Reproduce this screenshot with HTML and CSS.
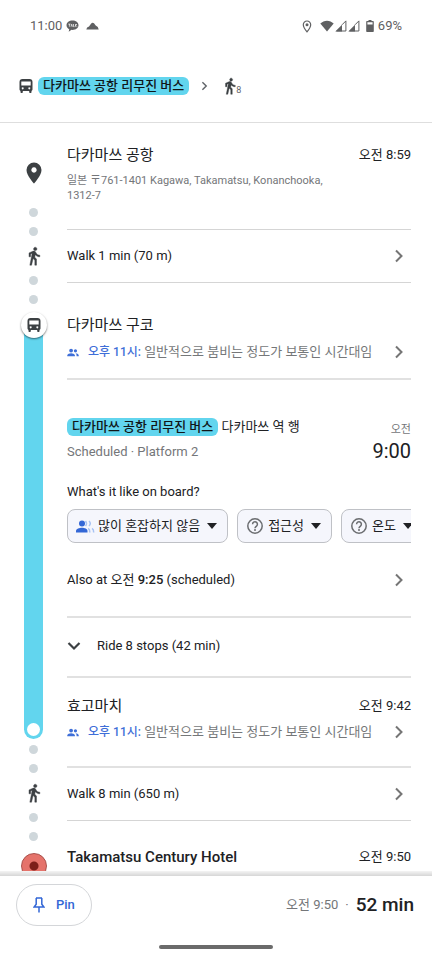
FILE: index.html
```html
<!DOCTYPE html>
<html lang="ko">
<head>
<meta charset="utf-8">
<meta name="viewport" content="width=device-width, initial-scale=1">
<title>다카마쓰 공항 리무진 버스</title>
<link rel="stylesheet" href="styles.css">
</head>
<body>
<svg class="defs" aria-hidden="true">
  <symbol id="walk" viewBox="0 0 24 24"><path stroke="currentColor" stroke-width=".5" d="M13.500 5.500c1.100 0 2-.9 2-2s-.9-2-2-2-2 .9-2 2 .9 2 2 2zM9.800 8.900L7 23h2.100l1.800-8 2.100 2v6h2v-7.500l-2.100-2 .6-3C14.800 12 16.800 13 19 13v-2c-1.900 0-3.500-1-4.300-2.400l-1-1.600c-.4-.6-1-1-1.700-1-.3 0-.5.1-.8.1L6 8.300V13h2V9.600l1.800-.7Z"/></symbol>
  <symbol id="bus" viewBox="0 0 14 14"><path fill-rule="evenodd" d="M3.500 0h7Q13.500 0 13.500 3V10.500Q13.500 11.300 12.500 11.900V13.200Q12.500 14 11.700 14H11Q10.200 14 10.200 13.200V12H3.800V13.200Q3.800 14 3 14H2.300Q1.500 14 1.500 13.200V11.900Q.5 11.300.5 10.500V3Q.5 0 3.500 0ZM2.300 2.500V6.500H11.700V2.500ZM3.700 8.200a1 1 0 1 0 .01 0ZM10.300 8.200a1 1 0 1 0 .01 0Z"/></symbol>
  <symbol id="chevron" viewBox="0 0 10 14"><path d="M2 1.500 7.500 7 2 12.500" fill="none" stroke="currentColor" stroke-width="2"/></symbol>
  <symbol id="group" viewBox="1 4 22 16"><path d="M16.500 12a3 3 0 1 0 0-6 3 3 0 0 0 0 6ZM8.500 12a3.500 3.500 0 1 0 0-7 3.500 3.500 0 0 0 0 7ZM8.500 13.500C6 13.500 1.500 14.800 1.500 17.200V19h14v-1.800c0-2.400-4.500-3.700-7-3.700ZM16.500 13.500c1.500 1 2 2.200 2 3.700V19h4v-1.800c0-2.200-3.500-3.500-6-3.700Z"/></symbol>
  <symbol id="help" viewBox="0 0 18 18"><g fill="none" stroke="currentColor" stroke-width="1.500"><circle cx="9" cy="9" r="7.200"/><path d="M6.600 7.300a2.400 2.400 0 1 1 3.900 1.800C9.600 9.800 9 10.100 9 11.200"/></g><circle cx="9" cy="13" r="1"/></symbol>
</svg>

<header>
  <div class="status">
    <span>11:00</span>
    <svg class="talk" viewBox="0 0 13 12"><path d="M6.500.5C3.200.5.500 2.500.500 5.200c0 1.700 1.100 3.100 2.700 4L2.700 11.700 5.500 9.800l1 .1c3.300 0 6-2 6-4.700S9.800.5 6.500.5Z"/><path d="M2.300 4.100h2.200M3.400 4v2.700M5 6.700l.7-2.500.7 2.500M7.500 4v2.600h1M9.500 4v2.700M11 4 9.700 5.300 11 6.700" fill="none" stroke="#fff" stroke-width=".7"/></svg>
    <svg class="cloud" viewBox="0 0 13 8"><path d="M.3 7.500Q.6 5.200 3 4.500L5 1.700Q6.300.2 8 1.200L9.700 3.600Q12.400 4.700 12.700 7.500Z"/></svg>
    <svg class="loc" viewBox="0 0 10 13"><path d="M5 1a3.700 3.700 0 0 0-3.700 3.800C1.300 7.500 5 11.800 5 11.800s3.700-4.300 3.700-7A3.700 3.700 0 0 0 5 1Z" fill="none" stroke="currentColor" stroke-width="1.200"/><circle cx="5" cy="4.700" r="1.500"/></svg>
    <svg class="wifi" viewBox="0 0 14 12"><path d="M7 11.500.3 3.600C4-.3 10-.3 13.700 3.600Z"/></svg>
    <svg class="signal" viewBox="0 0 12 12"><path d="M.3 11.500 7 4.800v6.700Z"/><path d="M7 4.800 10.900.9v10.100H1.500" fill="none" stroke="currentColor"/></svg>
    <svg class="signal" viewBox="0 0 12 12"><path d="M.3 11.500 7 4.800v6.700Z"/><path d="M7 4.800 10.900.9v10.100H1.500" fill="none" stroke="currentColor"/></svg>
    <svg class="battery" viewBox="0 0 8 12"><path fill-rule="evenodd" d="M2.500 0h3v1H7q.8 0 .8.800v9.400q0 .8-.8.800H1q-.8 0-.8-.8V1.800Q.2 1 1 1h1.500ZM1.400 2.200v2.300h5.200V2.200Z"/></svg>
    <span>69%</span>
  </div>
  <div class="summary">
    <svg class="bus-icon" role="img" aria-label="Bus"><use href="#bus"/></svg>
    <span class="line-badge">다카마쓰 공항 리무진 버스</span>
    <svg class="next"><use href="#chevron"/></svg>
    <svg class="walk-icon" role="img" aria-label="Walk"><use href="#walk"/></svg><small>8</small>
  </div>
</header>

<main>
  <div class="rail" aria-hidden="true">
    <svg class="pin" viewBox="0 0 16 22"><path fill-rule="evenodd" d="M8 .5A7.500 7.500 0 0 0 .5 8C.5 13.500 8 21.500 8 21.500S15.500 13.500 15.500 8A7.500 7.500 0 0 0 8 .5ZM8 5.300a2.700 2.700 0 1 1-.01 0Z"/></svg>
    <i class="dot"></i><i class="dot"></i>
    <svg class="walk-icon"><use href="#walk"/></svg>
    <i class="dot"></i><i class="dot"></i>
    <span class="stop-badge"><svg class="bus-icon"><use href="#bus"/></svg></span>
    <span class="track"></span>
    <i class="dot"></i><i class="dot"></i>
    <svg class="walk-icon"><use href="#walk"/></svg>
    <i class="dot"></i><i class="dot"></i>
    <span class="target"></span>
  </div>

  <div class="steps">
    <section class="origin thin">
      <div class="row"><h2>다카마쓰 공항</h2><time>오전 8:59</time></div>
      <p class="address">일본 〒761-1401 Kagawa, Takamatsu, Konanchooka, 1312-7</p>
    </section>
    <a class="walk row thin" href="#walk-1">Walk 1 min (70 m)<svg class="go"><use href="#chevron"/></svg></a>
    <section class="board thick">
      <h2>다카마쓰 구코</h2>
      <a class="crowd row" href="#crowd-1"><svg class="people"><use href="#group"/></svg><span><b>오후 11시:</b> 일반적으로 붐비는 정도가 보통인 시간대임</span><svg class="go"><use href="#chevron"/></svg></a>
    </section>
    <section class="ride thick">
      <div class="row top">
        <div class="service">
          <p><span class="line-badge">다카마쓰 공항 리무진 버스</span> 다카마쓰 역 행</p>
          <p class="muted">Scheduled · Platform 2</p>
        </div>
        <time class="depart"><span>오전</span><strong>9:00</strong></time>
      </div>
      <p class="question">What's it like on board?</p>
      <div class="chips">
        <button type="button"><svg class="crowding" viewBox="0 0 19 13"><g fill="#3367d6"><circle cx="6" cy="3.500" r="3"/><path d="M0 12.500V11C0 8.800 3.500 7.700 6 7.700S11.500 8.800 11.500 11v1.500Z"/></g><g fill="none" stroke="#a8c3f2" stroke-width="1.500"><path d="M9.500 1q2 2.500 0 5M13 1q2.500 2.500 0 5M12.200 8.300q1.700 1 1.600 4.200M16 8.300q1.800 1 1.700 4.200"/></g></svg><span>많이 혼잡하지 않음</span><i class="caret"></i></button>
        <button type="button"><svg class="help"><use href="#help"/></svg><span>접근성</span><i class="caret"></i></button>
        <button type="button"><svg class="help"><use href="#help"/></svg><span>온도</span><i class="caret"></i></button>
      </div>
      <a class="also row" href="#later"><span>Also at 오전 <b>9:25</b> (scheduled)</span><svg class="go"><use href="#chevron"/></svg></a>
    </section>
    <button type="button" class="stops thick"><svg viewBox="0 0 14 10"><path d="M1.500 2 7 7.500 12.500 2" fill="none" stroke="currentColor" stroke-width="2.200"/></svg>Ride 8 stops (42 min)</button>
    <section class="alight thick">
      <div class="row"><h2>효고마치</h2><time>오전 9:42</time></div>
      <a class="crowd row" href="#crowd-2"><svg class="people"><use href="#group"/></svg><span><b>오후 11시:</b> 일반적으로 붐비는 정도가 보통인 시간대임</span><svg class="go"><use href="#chevron"/></svg></a>
    </section>
    <a class="walk row thin" href="#walk-2">Walk 8 min (650 m)<svg class="go"><use href="#chevron"/></svg></a>
    <section class="destination row"><h2>Takamatsu Century Hotel</h2><time>오전 9:50</time></section>
  </div>
</main>

<footer>
  <div class="actions">
    <button type="button" class="pin-button"><svg viewBox="0 0 12 16"><path d="M3 1h6M3.200 1v6.300L1.200 10h9.600L8.800 7.300V1M6 10v5.500" fill="none" stroke="currentColor" stroke-width="1.500"/></svg>Pin</button>
    <p><span>오전 9:50</span><span>·</span><strong>52 min</strong></p>
  </div>
  <div class="handle"></div>
</footer>
</body>
</html>
```
FILE: styles.css
```css
* { box-sizing: border-box; }
body {
  margin: 0;
  height: 100vh;
  display: flex;
  flex-direction: column;
  background: #fff;
  color: #202124;
  font: 13px/20px Roboto, "Noto Sans CJK KR", sans-serif;
}
h2, p { margin: 0; font-weight: 400; }
a { color: inherit; text-decoration: none; }
button { font: inherit; color: inherit; cursor: pointer; }
svg { display: block; flex: none; fill: currentColor; }
b { font-weight: 500; }
.defs { position: absolute; width: 0; height: 0; }
header { border-bottom: 1px solid #dedede; }

.status {
  display: flex;
  align-items: center;
  padding: 16px 30px 0;
  color: #5f6062;
}
.talk { width: 13px; height: 12px; margin-left: 4px; }
.cloud { width: 13px; height: 8px; margin: 0 auto 0 7px; }
.loc { width: 10px; height: 13px; margin-right: 8px; }
.wifi { width: 14px; height: 12px; }
.signal { width: 12px; height: 12px; margin-left: 1px; }
.battery { width: 8px; height: 12px; margin: 0 4px 0 6px; }

.summary {
  display: flex;
  align-items: center;
  padding: 41px 19px 27px;
}
.bus-icon { width: 14px; height: 14px; color: #3c4043; }
.walk-icon { width: 20px; height: 20px; color: #3c4043; }
.line-badge {
  padding: 0 5px;
  border-radius: 6px;
  background: #62d5ee;
  color: #101518;
  font-weight: 500;
  line-height: 18px;
  display: inline-block;
}
.summary .line-badge { margin-left: 5px; }
.summary .walk-icon { width: 18px; height: 18px; }
.next { width: 7px; height: 10px; margin: 0 13px 0 12px; color: #5f6368; }
small { align-self: flex-end; margin-left: -3px; font-size: 9px; line-height: 10px; color: #5f6368; }

main {
  flex: 1;
  min-height: 0;
  overflow: hidden auto;
  scrollbar-width: none;
  display: grid;
  grid-template-columns: 67px minmax(0, 1fr);
  align-content: start;
  padding-right: 21px;
}
.rail {
  display: flex;
  flex-direction: column;
  align-items: center;
  gap: 10px;
  padding-top: 39px;
}
.pin { width: 16px; height: 22px; margin-bottom: 14px; color: #3c4043; }
.dot { width: 9px; height: 9px; border-radius: 50%; background: #cfd7db; flex: none; }
.stop-badge {
  z-index: 1;
  display: grid;
  place-items: center;
  width: 26px;
  height: 26px;
  margin: -2px 0 -23px;
  border-radius: 50%;
  background: #fff;
  box-shadow: 0 1px 2px #0008;
}
.track {
  display: flex;
  align-items: flex-end;
  flex: 1;
  width: 19px;
  margin-bottom: -4px;
  padding: 3px;
  border-radius: 10px;
  background: #62d5ee;
}
.track::after { content: ""; width: 13px; height: 13px; border-radius: 50%; background: #fff; }
.target {
  width: 26px;
  height: 26px;
  margin-top: 2px;
  border: 1px solid #a94f49;
  border-radius: 50%;
  background: radial-gradient(circle, #7d1f1a 4px, #e5736b 5px);
}

.row { display: flex; align-items: center; justify-content: space-between; }
.thin { border-bottom: 1px solid #d5d5d5; }
.thick { border-bottom: 2px solid #e1e1e1; }
h2 { font-size: 15px; line-height: 24px; }
.go { width: 10px; height: 14px; margin-right: 7px; color: #757575; }
.origin { padding: 20px 0 26px; }
.address { max-width: 272px; padding-top: 6px; color: #747679; font-size: 11px; line-height: 15px; }
.walk { padding: 16px 0; }
.board { padding: 30px 0 16px; }
.crowd { padding-top: 5px; color: #757779; }
.crowd b { color: #3f6fd8; font-size: 12px; }
.crowd .go { margin-left: auto; }
.people { width: 12px; height: 9px; margin-right: 9px; color: #3f6fd8; }
.ride { padding: 37px 0 26px; }
.row.top { align-items: stretch; }
.muted { padding-top: 5px; color: #747679; }
.depart { display: flex; flex-direction: column; align-items: flex-end; justify-content: flex-end; }
.depart span { font-size: 11px; line-height: 20px; color: #747679; }
.depart strong { font-size: 20px; line-height: 22px; font-weight: 400; }
.question { padding-top: 20px; }
.chips { display: flex; gap: 9px; padding-top: 7px; overflow: hidden; }
.chips button {
  display: flex;
  align-items: center;
  flex: none;
  height: 34px;
  padding: 0 10px 0 8px;
  border: 1px solid #bfc1c6;
  border-radius: 8px;
  background: #f5f6fc;
}
.crowding { width: 19px; height: 13px; margin-right: 3px; }
.help { width: 18px; height: 18px; margin-right: 4px; color: #6b6d70; }
.caret { margin-left: 7px; border: 5px solid transparent; border-top: 6px solid #202124; border-bottom: 0; }
.also { padding-top: 27px; }
.stops {
  display: flex;
  align-items: center;
  gap: 16px;
  width: 100%;
  padding: 18px 0 20px;
  border-width: 0 0 2px;
  background: none;
}
.stops svg { width: 14px; height: 10px; color: #3c4043; }
.alight { padding: 16px 0 24px; }
.alight .crowd { padding-top: 4px; }
.destination { padding: 24px 0 10px; }
.destination h2 { font-weight: 500; }

footer { flex: none; }
footer::before { content: ""; display: block; height: 5px; background: linear-gradient(#f4f4f4, #d6d6d6); }
.actions {
  display: flex;
  align-items: center;
  justify-content: space-between;
  padding: 8px 18px 0 16px;
}
.pin-button {
  display: flex;
  align-items: center;
  gap: 11px;
  padding: 10px 16px;
  border: 1px solid #d4d6d9;
  border-radius: 21px;
  background: #fff;
  color: #3367d6;
  font-weight: 500;
}
.pin-button svg { width: 12px; height: 16px; }
.actions p { display: flex; align-items: center; gap: 7px; color: #747679; }
.actions strong { color: #202124; font-size: 19px; font-weight: 500; }
.handle { width: 114px; height: 4px; margin: 19px auto 11px; border-radius: 2px; background: #6b6b6b; }
```
